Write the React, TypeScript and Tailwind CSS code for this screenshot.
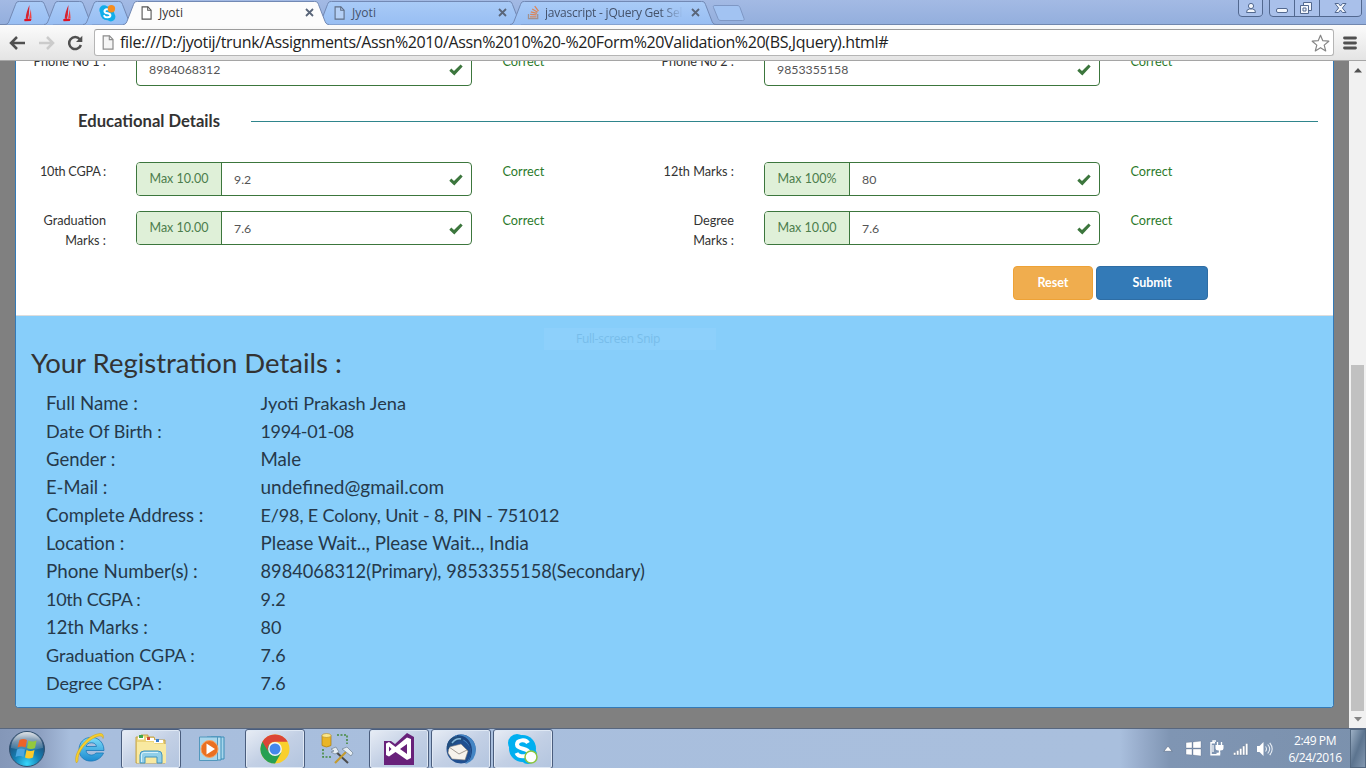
import React from "react";

const CAL = "font-['Lato',sans-serif]";
const SEG = "font-['Open_Sans',sans-serif]";

function TabShape({ w, active }: { w: number; active?: boolean }) {
  const d = `M0 24.5 C3 24.5 3.5 22.5 4.5 20 L10.5 4.5 C11.5 2 12 1.5 14.5 1.5 H${w - 14.5} C${w - 12} 1.5 ${w - 11.5} 2 ${w - 10.5} 4.5 L${w - 4.5} 20 C${w - 3.5} 22.5 ${w - 3} 24.5 ${w} 24.5`;
  return (
    <svg className="absolute left-0 top-0" width={w} height="26" viewBox={`0 0 ${w} 26`}>
      <defs>
        <linearGradient id="tabfill" x1="0" y1="0" x2="0" y2="1">
          <stop offset="0" stopColor="#a9cbf7" />
          <stop offset="1" stopColor="#98bef3" />
        </linearGradient>
      </defs>
      <path d={active ? `${d} V26 H0 Z` : d} fill={active ? "#fcfcfc" : "url(#tabfill)"} />
      <path d={d} fill="none" stroke="#7289b4" strokeWidth="1" />
    </svg>
  );
}

function PageIcon({ cls, fill = "#fff" }: { cls: string; fill?: string }) {
  return (
    <svg className={cls} viewBox="0 0 12 15">
      <path d="M1.2.8h6.3L11 4.4v9.8H1.2z" fill={fill} stroke="currentColor" strokeWidth="1.2" />
      <path d="M7.3.8v3.8H11" fill="none" stroke="currentColor" strokeWidth="1.1" />
    </svg>
  );
}

function Close({ cls }: { cls: string }) {
  return (
    <svg className={cls} width="9" height="9" viewBox="0 0 9 9">
      <path d="M1 1l7 7M8 1L1 8" stroke="#596579" strokeWidth="1.8" />
    </svg>
  );
}

function RedFlame() {
  return (
    <svg className="relative" width="9" height="17" viewBox="0 0 9 17">
      <path d="M5.5 0L4.8 10 3.8 14 1.700 13.600C1.800 9 3.600 4 5.500 0z" fill="#d52331" />
      <path d="M6.800 4L7.600 13.500 5 13.800z" fill="#f04545" />
      <path d="M0 14.400C3 13.300 5 14.200 7.500 14L6.800 16 .6 16.300z" fill="#e01222" />
    </svg>
  );
}

function SkypeSmall() {
  return (
    <svg className="relative" width="17" height="17" viewBox="0 0 17 17">
      <circle cx="5" cy="5" r="4.7" fill="#11aeea" />
      <circle cx="11.8" cy="11.8" r="4.6" fill="#11aeea" />
      <circle cx="8.3" cy="8.4" r="6.9" fill="#11aeea" />
      <path d="M11.3 5.5C10.2 3.6 5.5 3.7 5.5 6.2c0 3 5.9 1.3 5.9 4.1 0 2.6-5 2.6-6.1.6" fill="none" stroke="#fff" strokeWidth="2" strokeLinecap="round" />
      <circle cx="12.4" cy="3.8" r="3.7" fill="#f68d1e" />
    </svg>
  );
}

function TabStrip() {
  return (
    <div className="relative flex h-[25px] shrink-0 bg-gradient-to-b from-[#a3bae4] to-[#93aedd] pl-[5px]">
      <div className="absolute inset-x-0 bottom-0 h-px bg-[#7187ae]" />
      <div className="relative flex h-[25px] w-[50px] items-center justify-center"><TabShape w={50} /><span className="relative -left-[2px] top-px"><RedFlame /></span></div>
      <div className="relative -ml-[11px] flex h-[25px] w-[50px] items-center justify-center"><TabShape w={50} /><span className="relative -left-[2px] top-px"><RedFlame /></span></div>
      <div className="relative -ml-[11px] flex h-[25px] w-[50px] items-center justify-center"><TabShape w={50} /><span className="relative -left-[1px] top-px"><SkypeSmall /></span></div>
      <div className={`relative z-10 -ml-[10px] flex h-[25px] w-[206px] items-center text-[12px] text-[#333] ${SEG}`}>
        <TabShape w={206} active />
        <PageIcon cls="relative ml-[18px] h-[14px] w-[11px] text-[#555]" />
        <span className="relative ml-[7px] flex-1 tracking-[0.050px]">Jyoti</span>
        <Close cls="relative mr-[15px]" />
      </div>
      <div className={`relative -ml-[12px] flex h-[25px] w-[206px] items-center text-[12px] text-[#44526b] ${SEG}`}>
        <TabShape w={206} />
        <PageIcon cls="relative ml-[17px] h-[14px] w-[11px] text-[#5f6e85]" fill="#b5d0f5" />
        <span className="relative ml-[7px] flex-1 tracking-[0.050px]">Jyoti</span>
        <Close cls="relative mr-[16px]" />
      </div>
      <div className={`relative -ml-[13px] flex h-[25px] w-[206px] items-center text-[12px] text-[#44526b] ${SEG}`}>
        <TabShape w={206} />
        <svg className="relative ml-[17px] shrink-0" width="13" height="15" viewBox="0 0 13 15">
          <path d="M1.5 9v4.7h9.2V9" fill="none" stroke="#a0918f" strokeWidth="1.3" />
          <path d="M3 11.8h6.5M3.2 9.4l6.4.5M3.8 6.8l6.1 1.6M5.2 4l5.4 3.2M7.7 1.2l3.8 5" stroke="#dc8658" strokeWidth="1.3" />
        </svg>
        <span className="relative ml-[5px] w-[138px] overflow-hidden whitespace-nowrap tracking-[-0.22px] [mask-image:linear-gradient(90deg,#000_84%,transparent_100%)]">javascript - jQuery Get Sel</span>
        <Close cls="relative ml-[8px]" />
      </div>
      <svg className="relative ml-[-4px] mt-[5px]" width="34" height="17" viewBox="0 0 34 17">
        <path d="M1.5 2.5C1 1 1.5.5 3 .5H25c1.8 0 2.4.6 3 2l4 11c.5 1.5 0 2-1.500 2H9c-1.800 0-2.500-.6-3-2z" fill="#a2c3f2" stroke="#7e97c4" />
      </svg>
      <div className="flex-1" />
      <svg className="relative mr-[4px]" width="124" height="17" viewBox="0 0 124 17" fill="none" stroke="#52688f">
        <path d="M.5 0V13Q.5 16.500 4 16.500H20Q24.500 16.500 24.500 13V0" fill="#a9c0ea" />
        <path d="M31.500 0V13Q31.500 16.500 35 16.500H119Q123.500 16.500 123.500 13V0M56.500 0V16M81.500 0V16" fill="#a9c0ea" />
        <circle cx="13" cy="6" r="2.600" fill="#f4f7fc" />
        <path d="M8.500 12.500q0-3.500 3-3.500h3q3 0 3 3.500z" fill="#f4f7fc" />
        <rect x="38.500" y="8.500" width="11" height="4" rx="1.500" fill="#f4f7fc" />
        <path d="M65.500 2.500h8v8h-8z" fill="#f4f7fc" />
        <path d="M62.500 5.500h8v8h-8zM65 8h3v3h-3z" fill="#f4f7fc" />
        <path d="M97 3.500h3.500l2 2.500 2-2.500h3.500l-3.600 4.500 3.600 4.500h-3.500l-2-2.500-2 2.500H97l3.600-4.500z" fill="#f4f7fc" />
      </svg>
    </div>
  );
}

function Toolbar() {
  return (
    <div className="flex h-[36px] shrink-0 items-center border-b border-[#a5a5a5] bg-gradient-to-b from-[#fbfbfb] to-[#e4e4e4]">
      <svg className="ml-[9px]" width="16" height="14" viewBox="0 0 16 14"><path d="M16 7H3M8 1L2 7l6 6" fill="none" stroke="#505050" strokeWidth="2.500" /></svg>
      <svg className="ml-[14px]" width="16" height="14" viewBox="0 0 16 14"><path d="M0 7h13M8 1l6 6-6 6" fill="none" stroke="#cbcbcb" strokeWidth="2.500" /></svg>
      <svg className="ml-[12px] mr-px" width="16" height="16" viewBox="0 0 16 16"><path d="M12.800 4.200A6 6 0 1 0 13.900 10" fill="none" stroke="#505050" strokeWidth="2.500" /><path d="M15.300.8V7H9z" fill="#505050" /></svg>
      <div className="ml-[10px] flex h-[27px] w-[1240px] items-center rounded-[3px] border border-[#b5b5b5] border-t-[#9c9c9c] bg-white">
        <PageIcon cls="ml-[7px] h-[15px] w-[12px] text-[#8c8c8c]" fill="#f5f5f5" />
        <span className={`ml-[6px] flex-1 whitespace-nowrap pb-[2px] text-[16px] leading-[22px] tracking-[-0.360px] text-[#222] ${SEG}`}>
          file:///D:/jyotij/trunk/Assignments/Assn%2010/Assn%2010%20-%20Form%20Validation%20(BS,Jquery).html#
        </span>
        <svg className="mr-[3px]" width="19" height="18" viewBox="0 0 19 18"><path d="M9.500 1.200l2.300 5.500 6 .5-4.600 3.900 1.500 5.800-5.200-3.200-5.200 3.200 1.500-5.800L1.200 7.200l6-.5z" fill="#fff" stroke="#868686" strokeWidth="1.200" strokeLinejoin="round" /></svg>
      </div>
      <svg className="ml-[9px]" width="14" height="14" viewBox="0 0 14 14"><path d="M1.500 2h11M1.500 7h11M1.500 12h11" stroke="#505050" strokeWidth="2.800" strokeLinecap="round" /></svg>
    </div>
  );
}

function Check() {
  return (
    <svg width="14" height="12" viewBox="0 0 14 12"><path d="M.3 6.700L2.300 4.600 5 7 11.600.4 13.700 2.500 5.300 11.500z" fill="#3c763d" /></svg>
  );
}

function Field({ label, addon, value }: { label: React.ReactNode; addon?: string; value: string }) {
  return (
    <div className="flex h-[49px] w-[628px] text-[12.700px] leading-[20px]">
      <div className="-mt-px w-[90px] shrink-0 text-right">{label}</div>
      <div className="ml-[30px] flex h-[34px] w-[336px] shrink-0 items-center overflow-hidden rounded-[4px] border border-[#3c763d] bg-white">
        {addon && <span className="flex h-full w-[85px] shrink-0 items-center justify-center border-r border-[#3c763d] bg-[#dff0d8] text-[12.500px] text-[#4c7d4c]">{addon}</span>}
        <span className="ml-[12px] flex-1 pt-[1px] text-[12.300px] text-[#555]">{value}</span>
        <span className="mr-[8px] pt-[2px]"><Check /></span>
      </div>
      <div className="-mt-px ml-[30.500px] text-[12.700px] text-[#2b7a2b]">Correct</div>
    </div>
  );
}

const details: [string, string, string, string][] = [
  ["Full Name :", "text-[18.700px]", "Jyoti Prakash Jena", "text-[18.200px]"],
  ["Date Of Birth :", "text-[18px]", "1994-01-08", "text-[18px] tracking-[-0.350px]"],
  ["Gender :", "text-[18.500px]", "Male", "text-[18.700px]"],
  ["E-Mail :", "text-[18.400px]", "undefined@gmail.com", "text-[19px]"],
  ["Complete Address :", "text-[18.500px]", "E/98, E Colony, Unit - 8, PIN - 751012", "text-[18px] tracking-[-0.130px]"],
  ["Location :", "text-[18.400px]", "Please Wait.., Please Wait.., India", "text-[18.750px]"],
  ["Phone Number(s) :", "text-[18.800px]", "8984068312(Primary), 9853355158(Secondary)", "text-[18.230px]"],
  ["10th CGPA :", "text-[18px] tracking-[-0.270px]", "9.2", "text-[18px]"],
  ["12th Marks :", "text-[18.350px]", "80", "text-[18px]"],
  ["Graduation CGPA :", "text-[18px]", "7.6", "text-[18px]"],
  ["Degree CGPA :", "text-[18px] tracking-[-0.150px]", "7.6", "text-[18px]"],
];

function Page() {
  return (
    <div className="flex h-[667px] shrink-0 overflow-hidden bg-[#808080] pl-[15px]">
      <div className={`relative flex h-[647px] w-[1319px] flex-col overflow-hidden rounded-b-[4px] border border-t-0 border-[#337ab7] bg-white text-[#333] ${CAL}`}>
        <div className="-mt-[9px] flex h-[49px] shrink-0"><Field label="Phone No 1 :" value="8984068312" /><Field label="Phone No 2 :" value="9853355158" /></div>
        <div className="flex h-[61px] shrink-0 items-start pl-[62px]">
          <h4 className="mt-[9px] w-[173px] text-[16.600px] font-bold leading-[22px]">Educational Details</h4>
          <div className="mt-[20px] h-px w-[1067px] bg-[#2f858c]" />
        </div>
        <div className="flex shrink-0"><Field label={<span className="tracking-[-0.250px]">10th CGPA :</span>} addon="Max 10.00" value="9.2" /><Field label="12th Marks :" addon="Max 100%" value="80" /></div>
        <div className="flex shrink-0"><Field label={<>Graduation<br />Marks :</>} addon="Max 10.00" value="7.6" /><Field label={<>Degree<br />Marks :</>} addon="Max 10.00" value="7.6" /></div>
        <div className="mt-[6px] flex h-[49px] shrink-0 items-start gap-[3px] pl-[997px] text-[12.500px] font-bold text-white">
          <button className="h-[34px] w-[80px] rounded-[4px] border border-[#eea236] bg-[#f0ad4e]">Reset</button>
          <button className="h-[34px] w-[112px] rounded-[4px] border border-[#2e6da4] bg-[#337ab7]">Submit</button>
        </div>
        <div className="flex-1 border-t border-[#ddd] bg-[#87cefa] pl-[15px]">
          <h2 className="mt-[30px] h-[43px] text-[27.500px] leading-[34px]">Your Registration Details :</h2>
          {details.map(([k, kc, v, vc]) => (
            <div key={k} className="flex h-[28px] items-center pl-[15px] leading-[28px] text-[#26394a]">
              <span className={`w-[214.500px] ${kc}`}>{k}</span><span className={`whitespace-nowrap ${vc}`}>{v}</span>
            </div>
          ))}
        </div>
        <div className="absolute left-[528px] top-[267px] h-[22px] w-[172px] bg-[#8dd0fb] pl-[32px] font-['Open_Sans',sans-serif] text-[12px] leading-[21px] tracking-[-0.250px] text-[#78bdea]">Full-screen Snip</div>
      </div>
      <div className="ml-[15px] flex w-[17px] flex-col items-center bg-[#f1f1f1]">
        <svg className="mt-[7px]" width="8" height="5" viewBox="0 0 8 5"><path d="M0 4.500L4 0l4 4.500z" fill="#505050" /></svg>
        <div className="mt-[292px] h-[346px] w-[13px] bg-[#c1c1c1]" />
        <svg className="mt-[6px]" width="8" height="5" viewBox="0 0 8 5"><path d="M0 0l4 4.500L8 0z" fill="#858585" /></svg>
      </div>
    </div>
  );
}

function TaskButton({ cls, children }: { cls: string; children: React.ReactNode }) {
  return (
    <div className={`flex h-[40px] shrink-0 items-center justify-center rounded-[3px] border border-[#4a5d7d] bg-gradient-to-br from-[#e8edf5] via-[#c3d0e5] to-[#b3c5df] shadow-[inset_0_0_0_1px_#dfe8f4] ${cls}`}>{children}</div>
  );
}

function Taskbar() {
  return (
    <div className="flex h-[40px] shrink-0 items-center border-t border-[#58677f] bg-[linear-gradient(90deg,#8497b8_0px,#8da0c1_40px,#a8bedd_70px,#a9bfdd_1120px,#98adcc_1140px,#7f95b3_1170px,#7b91ad_1366px)]">
      <svg className="ml-[8px]" width="38" height="38" viewBox="0 0 38 38">
        <defs>
          <radialGradient id="orb" cx=".5" cy=".92" r=".9"><stop offset="0" stopColor="#37d6fb" /><stop offset=".4" stopColor="#1581b5" /><stop offset=".8" stopColor="#1f4e79" /><stop offset="1" stopColor="#71859c" /></radialGradient>
          <linearGradient id="orbShine" x1="0" y1="0" x2="0" y2="1"><stop offset="0" stopColor="#fff" stopOpacity=".75" /><stop offset="1" stopColor="#fff" stopOpacity=".1" /></linearGradient>
        </defs>
        <circle cx="19" cy="19" r="17.500" fill="url(#orb)" stroke="#33506e" />
        <path d="M3 18a16 16 0 0 1 32 0q-16 4-32 0z" fill="url(#orbShine)" />
        <path d="M11.500 10q4-2 7.500 0l-1.500 7.500q-4-2-8 0z" fill="#ec6328" />
        <path d="M20.500 10.500q4 2 8 0L27 18q-4 2-8 0z" fill="#94c83d" />
        <path d="M9 19.500q4-2 8 0L15.500 27q-4-2-8 0z" fill="#4ba6e0" />
        <path d="M18.500 20q4 2 8 0L25 27.500q-4 2-8 0z" fill="#fcca2a" />
      </svg>
      <svg className="ml-[27px]" width="34" height="34" viewBox="0 0 34 34">
        <defs><linearGradient id="ie" x1="0" y1="0" x2="0" y2="1"><stop offset="0" stopColor="#7bdcfa" /><stop offset="1" stopColor="#1c8bd0" /></linearGradient></defs>
        <path d="M31 18.500H13c.5 5 7 6 10 2.500h7.500C26 32 7 32.500 6 18 6 1 31 1 31 18.500zM13 14.500h10.500c-.5-5-9.500-5-10.500 0z" fill="url(#ie)" stroke="#1d79b8" strokeWidth=".8" />
        <path d="M3.500 31C-1 24 12 3 27 1.500c3-.2 4 2 3 5 0-3-4-3-7-1.500C13 9 4 21 5 29z" fill="#f7cf2e" stroke="#caa014" strokeWidth=".5" />
      </svg>
      <TaskButton cls="ml-[14px] w-[60px]">
        <svg width="34" height="32" viewBox="0 0 34 32">
          <path d="M2 4h5V2h7v2h6l1 3h10v23H2z" fill="#ecd47a" stroke="#c3a34b" />
          <path d="M4 3.500h6v3H4z" fill="#fff" /><path d="M5 2h4v3H5z" fill="#40a64a" />
          <path d="M12 5h8v3h-8z" fill="#fff" /><path d="M13 4h3v3h-3z" fill="#d04b35" />
          <path d="M20 7h9v3h-9z" fill="#fff" /><path d="M22 6h3v3h-3z" fill="#3c7ecb" />
          <path d="M3 9h16l2 2h11v19H3z" fill="#f8e9a1" />
          <path d="M6 30V22q0-4 4-4h14q4 0 4 4v8h-5v-6H11v6z" fill="#91cfe9" stroke="#3f93bf" />
          <path d="M7.500 29v-7q0-2.500 2.500-2.500h14" fill="none" stroke="#d7f1fa" />
        </svg>
      </TaskButton>
      <svg className="ml-[17px]" width="30" height="30" viewBox="0 0 30 30">
        <path d="M13 3h13v22H13z" fill="#a7d6ec" stroke="#3a8db8" /><path d="M9 3h14v23H9z" fill="#b9dff0" stroke="#3a8db8" />
        <path d="M1.500 3h18v23.500h-18z" fill="#a9d6eb" stroke="#5398bd" />
        <circle cx="11.500" cy="15" r="8.500" fill="#ea7021" stroke="#f5a464" /><path d="M8.500 9.500l8.500 5.500-8.500 5.500z" fill="#fff" />
      </svg>
      <TaskButton cls="ml-[17px] w-[60px]">
        <svg width="30" height="30" viewBox="0 0 30 30">
          <circle cx="15" cy="15" r="14.500" fill="#f9cf2c" />
          <path d="M2.440 7.750A14.500 14.500 0 0 0 15 29.500L21.300 18.600 15 15z" fill="#27a052" />
          <path d="M2.440 7.750A14.500 14.500 0 0 1 27.560 7.750H15A7.200 7.200 0 0 0 8.200 17.500z" fill="#dc4637" />
          <circle cx="15" cy="15" r="6.900" fill="#f3f5f7" /><circle cx="15" cy="15" r="5.500" fill="#4487ed" />
        </svg>
      </TaskButton>
      <svg className="ml-[16px]" width="34" height="34" viewBox="0 0 34 34">
        <path d="M16 3h10v9M2 17v8h9" fill="none" stroke="#468a3f" strokeWidth="1.600" strokeDasharray="2 1.500" />
        <path d="M1 3.500v10q4.500 3 9 0v-10z" fill="#e9b526" stroke="#a87a11" strokeWidth=".7" /><ellipse cx="5.500" cy="3.500" rx="4.500" ry="2" fill="#fae68a" stroke="#a87a11" strokeWidth=".5" />
        <path d="M13 18L27 31" stroke="#4b4b4b" strokeWidth="2" /><path d="M14 31L25 20" stroke="#c39b30" strokeWidth="2.200" />
        <path d="M21 17l5-2 6 6-2 3-5-4z" fill="#e5edf3" stroke="#718293" strokeWidth=".7" /><path d="M10 17l5-2 3 5-4 2-4-2 3-1z" fill="#e5edf3" stroke="#718293" strokeWidth=".7" />
      </svg>
      <TaskButton cls="ml-[14px] w-[60px]">
        <svg width="30" height="32" viewBox="0 0 30 32"><path d="M0 8h7l4 3L23 0l7 4v28H0z" fill="#68217a" /><path fillRule="evenodd" d="M23 4.500L27 6v19l-4 2L11.500 19 5 23.500 2 22V10.500L5 9l6.500 5zM23 11l-7 5 7 5zM5 13.500v5l2.500-2.500z" fill="#fff" /></svg>
      </TaskButton>
      <TaskButton cls="ml-[2px] w-[60px]">
        <svg width="32" height="32" viewBox="0 0 32 32">
          <circle cx="16" cy="16" r="14.500" fill="#204f90" /><path d="M8 4C16-2 30 3 31 16q0 12-11 15 8-8 5-17Q19 5 8 4z" fill="#4385c4" />
          <path d="M12 2Q26 3 27 17q0 7-4 12 5-10 1-17-4-7-12-7z" fill="#1c4480" />
          <path d="M4 14L16 11l7 7-3 9-13-1-4-6z" fill="#f7f3ec" stroke="#807c78" strokeWidth=".6" /><path d="M4 14l10 7 8-4" fill="none" stroke="#a49c93" />
          <path d="M2 16C1 8 7 2 15 3l4 4-6 1-5 4q-4 1-4 4z" fill="#214d7e" /><path d="M7 10q4-5 9-4" stroke="#86b9dc" strokeWidth="1.500" fill="none" />
        </svg>
      </TaskButton>
      <TaskButton cls="ml-[2px] w-[60px]">
        <svg width="32" height="32" viewBox="0 0 32 32"><circle cx="10" cy="10" r="9" fill="#00aff0" /><circle cx="21" cy="22" r="9" fill="#00aff0" /><circle cx="15.500" cy="15.500" r="13.500" fill="#00aff0" /><path d="M21 10C19 6 10 6.500 10 11.500c0 5.500 11.500 3 11.500 8 0 5-10 5-12 .5" fill="none" stroke="#fff" strokeWidth="4" /><circle cx="24" cy="24" r="6" fill="#fff" stroke="#8cc63f" strokeWidth="1.500" /></svg>
      </TaskButton>
      <div className="flex-1" />
      <svg width="10" height="7" viewBox="0 0 9 6"><path d="M.8 5.500h7.400L4.500.8z" fill="#fff" stroke="#52647d" strokeWidth=".5" /></svg>
      <svg className="ml-[12px]" width="17" height="17" viewBox="0 0 17 17"><path d="M1 2.500l6-.5v6H1zM8 1.900l8-.8V8H8zM1 9h6v6l-6-.5zM8 9h8v7L8 15.100z" fill="#fff" stroke="#52647d" strokeWidth=".3" /></svg>
      <svg className="ml-[6px]" width="17" height="17" viewBox="0 0 17 17"><path d="M7 2.800H3v12h8.500V12M5 2.500V1h3" fill="none" stroke="#fff" strokeWidth="1.400" /><path d="M5 5v7" stroke="#fff" strokeWidth="1.200" /><path d="M7.500 5h8v3q0 2.500-3 2.500h-2q-3 0-3-2.500z" fill="#fff" /><path d="M9.500 5V2M13.500 5V2M11.500 10v3.500H8.500" stroke="#fff" strokeWidth="1.300" fill="none" /></svg>
      <svg className="ml-[7px]" width="18" height="14" viewBox="0 0 17 14"><path d="M1 10.500h2.300V13H1zM4 8.500h2.300V13H4zM7 6.500h2.300V13H7zM10 4h2.300v9H10zM13 1.500h2.300V13H13z" fill="#fff" stroke="#55677f" strokeWidth=".3" /></svg>
      <svg className="ml-[6px] mr-px" width="18" height="16" viewBox="0 0 18 16"><path d="M1 5h2.500L7.500 1v14l-4-4H1z" fill="#fff" /><path d="M9.500 5.500q2 2.500 0 5M11.700 3.500q4 4.500 0 9M13.700 1.800q5 6 0 12.400" fill="none" stroke="#e7edf4" strokeWidth="1.100" /></svg>
      <div className={`ml-[9px] w-[62px] text-center text-[12px] leading-[17px] tracking-[-0.400px] text-white ${SEG}`}>2:49 PM<br />6/24/2016</div>
      <div className="ml-[4px] h-[39px] w-[16px] border border-[#536880] bg-gradient-to-br from-[#9db0c5] via-[#5c748f] to-[#8398b0]" />
    </div>
  );
}

export default function App() {
  return (
    <div className="flex h-[768px] w-[1366px] flex-col overflow-hidden bg-white">
      <TabStrip />
      <Toolbar />
      <Page />
      <Taskbar />
    </div>
  );
}
